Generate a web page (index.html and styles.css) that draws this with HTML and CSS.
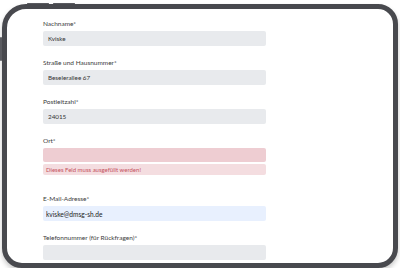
FILE: index.html
```html
<!DOCTYPE html>
<html lang="de">
<head>
    <meta charset="UTF-8">
    <meta name="viewport" content="width=device-width, initial-scale=1.0">
    <title>Kontaktformular</title>
    <link rel="stylesheet" href="styles.css">
</head>
<body>
    <div class="device">
        <span class="key key-a"></span>
        <span class="key key-b"></span>
        <span class="key key-side"></span>
        <div class="screen">
            <form class="form">
                <div class="field">
                    <label>Nachname*</label>
                    <input type="text" value="Kviske">
                </div>
                <div class="field">
                    <label>Straße und Hausnummer*</label>
                    <input type="text" value="Beselerallee 67">
                </div>
                <div class="field">
                    <label>Postleitzahl*</label>
                    <input type="text" value="24015">
                </div>
                <div class="field field-error">
                    <label>Ort*</label>
                    <input type="text" value="">
                    <div class="error">Dieses Feld muss ausgefüllt werden!</div>
                </div>
                <div class="field">
                    <label>E-Mail-Adresse*</label>
                    <input type="text" class="filled" value="kviske@dmsg-sh.de">
                </div>
                <div class="field">
                    <label>Telefonnummer (für Rückfragen)*</label>
                    <input type="text" value="">
                </div>
            </form>
        </div>
    </div>
</body>
</html>
```

FILE: styles.css
```css
body {
    margin: 0;
    background: #fff;
    font-family: Lato, "Open Sans", Arial, sans-serif;
}
.device {
    position: relative;
    width: 386px;
    height: 254px;
    margin: 4px 2px 0 2px;
    border: 5px solid #48494e;
    border-radius: 24px 20px 20px 20px;
    box-shadow: 0 3px 5px rgba(0, 0, 0, 0.22);
    background: #fff;
}
.key {
    position: absolute;
    background: #5a5b60;
    border-radius: 1px;
}
.key-a {
    top: -6.5px;
    left: 20px;
    width: 22px;
    height: 1.5px;
}
.key-b {
    top: -6.5px;
    left: 46px;
    width: 22px;
    height: 1.5px;
}
.key-side {
    top: 28px;
    left: -7px;
    width: 1.5px;
    height: 24px;
}
.screen {
    height: 100%;
    overflow: hidden;
    border-radius: 19px 15px 15px 15px;
}
.form {
    display: flex;
    flex-direction: column;
    gap: 12px;
    width: 223px;
    padding: 10px 0 0 36px;
}
.field {
    display: flex;
    flex-direction: column;
    gap: 3px;
}
label {
    font-size: 6.5px;
    line-height: 9px;
    color: #3c3c3c;
}
input {
    box-sizing: border-box;
    width: 100%;
    height: 15px;
    padding: 0 5px;
    border: none;
    border-radius: 2px;
    background: #e8eaed;
    font-family: Lato, "Open Sans", Arial, sans-serif;
    font-size: 6.3px;
    color: #333;
    outline: none;
}
input.filled {
    background: #e8f0fe;
    font-size: 6.6px;
    padding: 0 3px;
    color: #222;
}
.field-error input {
    background: #eecdd2;
    height: 14px;
}
.field-error {
    margin-bottom: 7px;
}
.error {
    margin-top: -1px;
    height: 11px;
    padding: 0 3px;
    border-radius: 2px;
    background: #f4dde0;
    font-size: 6px;
    line-height: 11px;
    color: #c4505c;
}
```
